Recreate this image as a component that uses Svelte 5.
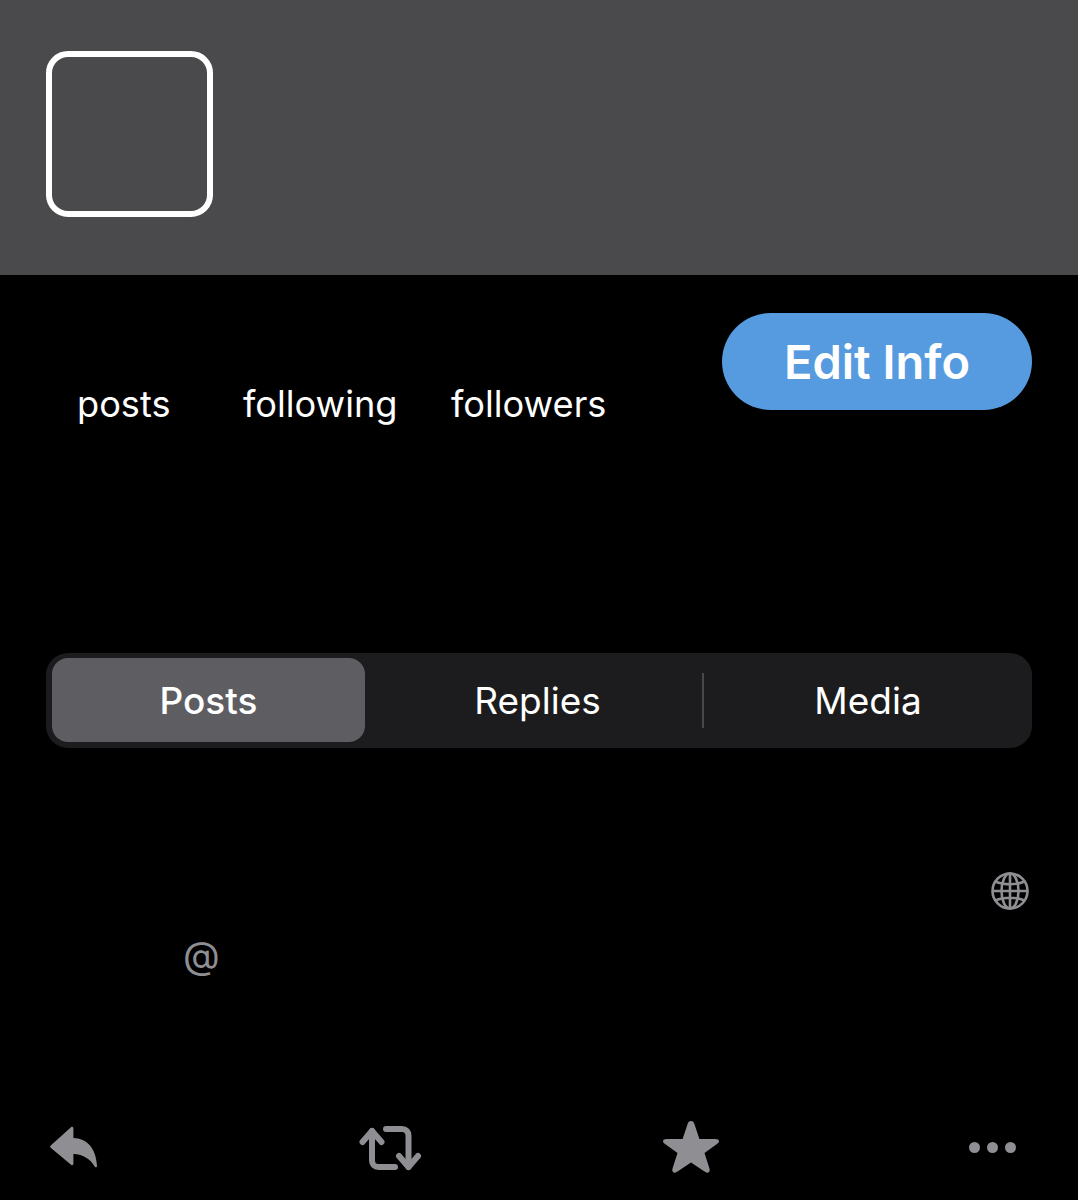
<script>
  const stats = ["posts", "following", "followers"];
  const tabs = ["Posts", "Replies", "Media"];
</script>

<div class="page">
  <header class="banner">
    <div class="avatar"></div>
  </header>

  <section class="top-row">
    <div class="stats">
      {#each stats as label}
        <span>{label}</span>
      {/each}
    </div>
    <button class="edit">Edit Info</button>
  </section>

  <nav class="tabs">
    {#each tabs as tab, i}
      <div class="tab" class:active={i === 0} class:divided={i === 1}>{tab}</div>
    {/each}
  </nav>

  <section class="meta">
    <div class="globe-row">
      <svg width="40" height="40" viewBox="0 0 40 40" fill="none" stroke="#8e8e93" stroke-width="2.6">
        <circle cx="20" cy="20" r="17.5" />
        <ellipse cx="20" cy="20" rx="8.5" ry="17.5" />
        <path d="M20 2.5v35M2.5 20h35M5.5 10.5c8 3.6 21 3.6 29 0M5.5 29.5c8-3.6 21-3.6 29 0" />
      </svg>
    </div>
    <div class="handle">@</div>
  </section>

  <footer class="actions">
    <svg class="reply" width="50" height="44" viewBox="0 0 50 44" fill="#8e8e93">
      <path d="M22 2.2c.9-.9 2.4-.3 2.4 1V13c13.500.3 22.600 10 23.600 27.700.1 1.800-1.500 2.200-2.300.8-4.100-7.200-11.300-12.100-21.300-12.500v9.800c0 1.300-1.500 1.900-2.400 1L1.700 22.800c-.7-.7-.7-1.700 0-2.400z" />
    </svg>
    <svg class="repost" width="64" height="48" viewBox="0 0 64 48" fill="none" stroke="#8e8e93" stroke-width="6" stroke-linecap="round" stroke-linejoin="round">
      <path d="M27 6h16c4 0 6.500 2.500 6.500 6.500V44" />
      <path d="M40 33l9.500 11 9.500-11" />
      <path d="M36 44H19.500c-4 0-6.500-2.500-6.500-6.500V8" />
      <path d="M3.500 19L13 8l9.500 11" />
    </svg>
    <svg class="star" width="56" height="54" viewBox="0 0 56 54" fill="#8e8e93">
      <path d="M28 1c1.800 0 2.800 1.200 3.400 3l5 15h15.800c2.400 0 3.800.8 3.800 2.300 0 1-.7 1.900-2 2.800L41.500 33l4.900 15.300c.5 1.600.4 3-.7 3.900-1.300 1-2.800.5-4.200-.6L28 42.500l-13.500 9.100c-1.400 1-2.900 1.600-4.200.6-1.100-.9-1.200-2.300-.7-3.900L14.500 33 2 24.100c-1.300-.9-2-1.800-2-2.800C0 19.800 1.400 19 3.800 19h15.800l5-15c.6-1.800 1.600-3 3.400-3z" />
    </svg>
    <div class="more">
      <i></i><i></i><i></i>
    </div>
  </footer>
</div>

<style>
  :global(body) {
    background: #000;
  }

  .page {
    width: 1078px;
    height: 1200px;
    overflow: hidden;
    background: #000;
    color: #fff;
    font-family: Inter, "Noto Sans", sans-serif;
  }

  .banner {
    height: 275px;
    box-sizing: border-box;
    padding: 51px 0 0 46px;
    background: #4a4a4c;
  }

  .avatar {
    width: 167px;
    height: 166px;
    box-sizing: border-box;
    border: 6px solid #fff;
    border-radius: 22px;
  }

  .top-row {
    display: flex;
    justify-content: space-between;
    align-items: flex-start;
    padding: 38px 46px 0 77px;
  }

  .stats {
    display: grid;
    grid-template-columns: 166px 208px auto;
    padding-top: 69px;
    font-size: 36.2px;
    line-height: 44px;
  }

  .edit {
    width: 310px;
    height: 97px;
    border: 0;
    border-radius: 49px;
    background: #569be0;
    color: #fff;
    font: 600 47px Inter, "Noto Sans", sans-serif;
  }

  .tabs {
    display: grid;
    grid-template-columns: 313px 345px 1fr;
    height: 95px;
    box-sizing: border-box;
    margin: 227px 46px 0;
    padding: 5px 6px 6px;
    border-radius: 22px;
    background: #1c1c1e;
    font-size: 37px;
  }

  .tab {
    position: relative;
    display: flex;
    align-items: center;
    justify-content: center;
    border-radius: 16px;
  }

  .tab.active {
    background: #5d5d62;
    font-weight: 500;
  }

  .tab.divided::after {
    content: "";
    position: absolute;
    top: 15px;
    right: 6px;
    width: 2px;
    height: 55px;
    background: #48484a;
  }

  .meta {
    padding-top: 123px;
    color: #8e8e93;
  }

  .globe-row {
    display: flex;
    justify-content: flex-end;
    padding-right: 48px;
    height: 40px;
  }

  .handle {
    margin: 21px 0 0 183px;
    font-size: 38px;
    line-height: 46px;
  }

  .actions {
    display: flex;
    align-items: center;
    height: 54px;
    margin-top: 142px;
    padding-left: 49px;
  }

  .repost {
    margin-left: 260px;
  }

  .star {
    margin-left: 240px;
  }

  .more {
    display: flex;
    gap: 7px;
    margin-left: 250px;
  }

  .more i {
    width: 11px;
    height: 11px;
    border-radius: 50%;
    background: #8e8e93;
  }
</style>
